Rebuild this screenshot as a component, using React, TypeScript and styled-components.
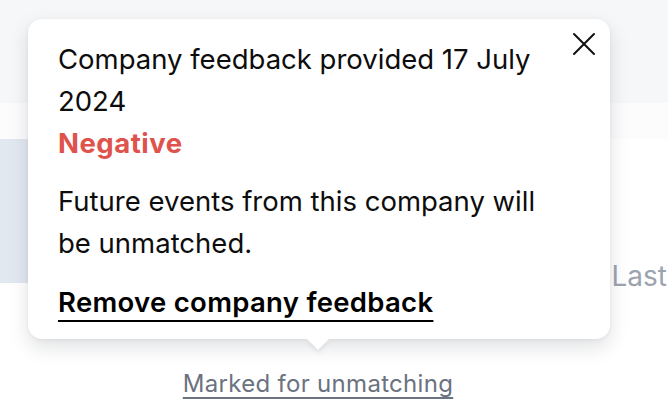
import React from "react";
import styled, { createGlobalStyle } from "styled-components";

const GlobalStyle = createGlobalStyle`
  html, body {
    margin: 0;
    padding: 0;
    background: #ffffff;
    font-family: Inter, "Noto Sans", sans-serif;
  }
  * { box-sizing: border-box; }
`;

const Page = styled.div`
  position: relative;
  width: 668px;
  height: 420px;
  overflow: hidden;
  background: #ffffff;
`;

const TopBand = styled.div`
  height: 103px;
  background: #f6f7f9;
`;

const Gap = styled.div`
  height: 36px;
  background: #fcfcfd;
`;

const ContentRow = styled.div`
  display: flex;
  justify-content: space-between;
  align-items: flex-start;
  height: 144px;
`;

const SideBlock = styled.div`
  width: 40px;
  height: 144px;
  background: #e2e8f0;
`;

const LastLabel = styled.span`
  margin-top: 121px;
  margin-right: 1px;
  font-size: 28px;
  line-height: 32px;
  white-space: nowrap;
  color: #9ca3af;
`;

const TriggerRow = styled.div`
  display: flex;
  justify-content: center;
  padding: 86px 32px 0 0;
`;

const Trigger = styled.span`
  font-size: 24px;
  line-height: 29px;
  letter-spacing: 0.3px;
  color: #6b7280;
  text-decoration: underline;
  text-underline-offset: 5px;
  text-decoration-thickness: 1.5px;
`;

const Popover = styled.div`
  position: absolute;
  left: 28px;
  top: 19px;
  width: 582px;
  height: 320px;
  padding: 19px 30px 0 30px;
  background: #ffffff;
  border-radius: 14px;
  box-shadow: 0 8px 20px rgba(15, 23, 42, 0.13), 0 1px 4px rgba(15, 23, 42, 0.06);
  color: #0d0d0d;

  &::after {
    content: "";
    position: absolute;
    left: 279px;
    bottom: -11px;
    width: 0;
    height: 0;
    border-left: 11px solid transparent;
    border-right: 11px solid transparent;
    border-top: 11px solid #ffffff;
    filter: drop-shadow(0 3px 2px rgba(15, 23, 42, 0.08));
  }
`;

const CloseButton = styled.button`
  position: absolute;
  top: 13px;
  right: 14px;
  width: 24px;
  height: 24px;
  padding: 0;
  border: none;
  background: none;
  display: flex;
  align-items: center;
  justify-content: center;
`;

const Text = styled.p<{ $gap?: number }>`
  margin: ${(p) => p.$gap ?? 0}px 0 0 0;
  max-width: 500px;
  font-size: 27.5px;
  line-height: 42px;
  letter-spacing: 0;
`;

const Status = styled.div`
  font-size: 27.5px;
  line-height: 42px;
  letter-spacing: 0.5px;
  font-weight: 700;
  color: #e0534d;
`;

const RemoveLink = styled.a`
  display: inline-block;
  margin-top: 17px;
  font-size: 27.5px;
  line-height: 42px;
  letter-spacing: 0.3px;
  font-weight: 600;
  color: #000000;
  text-decoration: underline;
  text-underline-offset: 8px;
  text-decoration-thickness: 2px;
`;

export default function App() {
  return (
    <Page>
      <GlobalStyle />
      <TopBand />
      <Gap />
      <ContentRow>
        <SideBlock />
        <LastLabel>Last</LastLabel>
      </ContentRow>
      <TriggerRow>
        <Trigger>Marked for unmatching</Trigger>
      </TriggerRow>
      <Popover>
        <CloseButton aria-label="Close">
          <svg width="24" height="24" viewBox="0 0 24 24" fill="none">
            <path d="M2 2L22 22M22 2L2 22" stroke="#111111" strokeWidth="2" strokeLinecap="round" />
          </svg>
        </CloseButton>
        <Text>Company feedback provided 17 July 2024</Text>
        <Status>Negative</Status>
        <Text $gap={16}>Future events from this company will be unmatched.</Text>
        <RemoveLink>Remove company feedback</RemoveLink>
      </Popover>
    </Page>
  );
}
